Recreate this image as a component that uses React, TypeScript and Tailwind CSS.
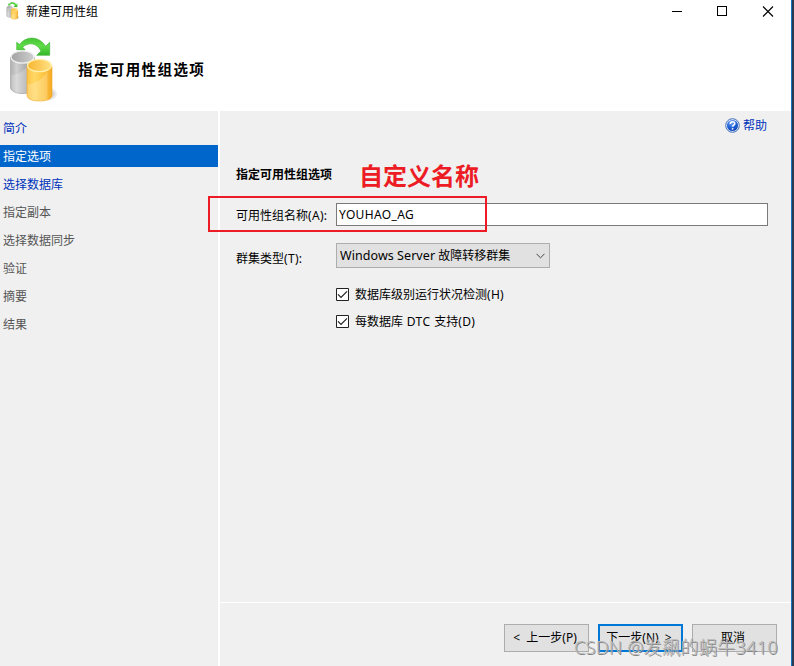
import type { ReactNode } from "react";
import { clsx } from "clsx";

type Step = { label: string; state: "link" | "active" | "pending" };

const steps: Step[] = [
  { label: "简介", state: "link" },
  { label: "指定选项", state: "active" },
  { label: "选择数据库", state: "link" },
  { label: "指定副本", state: "pending" },
  { label: "选择数据同步", state: "pending" },
  { label: "验证", state: "pending" },
  { label: "摘要", state: "pending" },
  { label: "结果", state: "pending" },
];

function DatabaseIcon({ className }: { className?: string }) {
  return (
    <svg viewBox="0 0 50 66" className={className} fill="none">
      <defs>
        <linearGradient id="silver" x1="0" x2="1">
          <stop offset="0" stopColor="#b0b0b0" />
          <stop offset="0.25" stopColor="#cfcfcf" />
          <stop offset="0.6" stopColor="#b0b0b0" />
          <stop offset="1" stopColor="#949494" />
        </linearGradient>
        <linearGradient id="gold" x1="0" x2="1">
          <stop offset="0" stopColor="#fcc344" />
          <stop offset="0.3" stopColor="#ffd865" />
          <stop offset="0.7" stopColor="#fdc340" />
          <stop offset="1" stopColor="#f5aa25" />
        </linearGradient>
        <linearGradient id="silverTop" x1="0" x2="1">
          <stop offset="0" stopColor="#a2a2a2" />
          <stop offset="1" stopColor="#cfcfcf" />
        </linearGradient>
        <linearGradient id="goldTop" x1="0" x2="1">
          <stop offset="0" stopColor="#f8b52f" />
          <stop offset="1" stopColor="#ffe185" />
        </linearGradient>
        <linearGradient id="green" x1="0" y1="0" x2="0" y2="1">
          <stop offset="0" stopColor="#45c233" />
          <stop offset="0.45" stopColor="#5fdc48" />
          <stop offset="1" stopColor="#36b82a" />
        </linearGradient>
        <radialGradient id="shade">
          <stop offset="0" stopColor="#777" stopOpacity="0.65" />
          <stop offset="1" stopColor="#777" stopOpacity="0" />
        </radialGradient>
      </defs>
      <ellipse cx="39" cy="57" rx="10" ry="7" fill="url(#shade)" />
      <path d="M1.500 20v30c0 4 5 6.500 12 6.500S25.500 54 25.500 50V20z" fill="url(#silver)" stroke="#9b9b9b" strokeWidth=".6" />
      <path d="M2.500 38c6 0 14-4 18-12v30H8c-3-1-5.500-3-5.500-6z" fill="#fff" opacity=".22" />
      <ellipse cx="13.500" cy="20" rx="11.500" ry="6.200" fill="url(#silverTop)" stroke="#f1f1f1" strokeWidth="1.200" />
      <path d="M18 28.500V58c0 4 5 6 12.500 6S43 62 43 58V28.500z" fill="url(#gold)" stroke="#eeaa2c" strokeWidth=".6" />
      <path d="M18.500 47c7 0 15-4 20-13v29c-6 2-20 1-20-5z" fill="#fff" opacity=".2" />
      <ellipse cx="30.500" cy="28.500" rx="11.900" ry="6.200" fill="url(#goldTop)" stroke="#fff0ad" strokeWidth="1.200" />
      <path
        d="M7.700 5.300v7.400h8.500l-2.600-2.400c5-5 14-5.300 18.400 3.700l-4.300 4.300h13V5.300l-4 4C30-.800 18-1.800 10.500 7.400z"
        fill="url(#green)"
        stroke="#3bb02f"
        strokeWidth=".6"
        strokeLinejoin="round"
      />
    </svg>
  );
}

function HelpIcon() {
  return (
    <svg viewBox="0 0 15 15" className="size-[15px] -translate-y-px" fill="none">
      <defs>
        <radialGradient id="help" cx=".4" cy=".25" r=".8">
          <stop offset="0" stopColor="#77a9f5" />
          <stop offset=".55" stopColor="#2263d8" />
          <stop offset="1" stopColor="#0b3fae" />
        </radialGradient>
      </defs>
      <circle cx="7.500" cy="7.500" r="6.800" fill="#e3edfb" stroke="#4470b8" strokeWidth="1" />
      <circle cx="7.500" cy="7.500" r="5.500" fill="url(#help)" />
      <path d="M5.300 5.900c0-2.900 4.500-2.800 4.500-.3 0 1.600-2.200 1.500-2.200 3.200" stroke="#fff" strokeWidth="1.600" />
      <circle cx="7.600" cy="10.800" r=".9" fill="#fff" />
    </svg>
  );
}

function TitleBar() {
  return (
    <div className="flex h-6 items-center pl-[5px]">
      <DatabaseIcon className="mr-[5px] h-[18px] w-4 -translate-y-px" />
      <span className="text-[12px] text-black">新建可用性组</span>
      <div className="mr-[17px] mb-0.5 ml-auto flex items-center gap-[35px]">
        <svg viewBox="0 0 10 10" className="size-[10px]" shapeRendering="crispEdges">
          <path d="M0 5.500h10" stroke="#000" />
        </svg>
        <svg viewBox="0 0 10 10" className="size-[10px]" shapeRendering="crispEdges">
          <path d="M.5.500h9v9h-9z" stroke="#000" fill="none" />
        </svg>
        <svg viewBox="0 0 12 11" className="h-[11px] w-3">
          <path d="M1 .500l10 10M11 .500l-10 10" stroke="#000" strokeWidth="1.100" />
        </svg>
      </div>
    </div>
  );
}

function Sidebar() {
  return (
    <nav className="flex w-[220px] flex-col gap-1.5 border-r-2 border-white pt-1.5">
      {steps.map((step) => (
        <div
          key={step.label}
          className={clsx(
            "flex h-[22px] items-center pt-0.5 pl-[3px] text-[12px]",
            step.state === "active" && "bg-[#0066cc] text-white",
            step.state === "link" && "text-[#0033bb]",
            step.state === "pending" && "text-[#555555]",
          )}
        >
          {step.label}
        </div>
      ))}
    </nav>
  );
}

function CheckOption({ children }: { children: ReactNode }) {
  return (
    <label className="flex h-[27px] items-center gap-1.5">
      <svg viewBox="0 0 13 13" className="size-[13px]" fill="none">
        <path d="M.5.500h12v12h-12z" fill="#fff" stroke="#222" />
        <path d="M2 6.300l3 3 6-6" stroke="#222" strokeWidth="1.200" />
      </svg>
      <span>{children}</span>
    </label>
  );
}

function DialogButton({ primary, children }: { primary?: boolean; children: ReactNode }) {
  return (
    <button
      className={clsx(
        "flex h-7 w-[85px] items-center justify-center bg-[#e1e1e1] text-[12px] whitespace-pre text-black",
        primary ? "border-2 border-[#0078d7] pr-[3px]" : "border border-[#adadad] pr-[3px]",
      )}
    >
      {children}
    </button>
  );
}

export default function App() {
  return (
    <div className="relative flex h-[666px] w-[794px] flex-col overflow-hidden border-r-2 border-[#2c3b52] bg-[#f0f0f0] font-['Noto_Sans','Noto_Sans_CJK_SC',sans-serif] text-[12px] leading-5 text-black">
      <div className="flex min-h-0 flex-1 flex-col border-r border-[#1873c5]">
        <header className="h-[111px] bg-white">
          <TitleBar />
          <div className="flex h-[87px] items-start pl-[9px]">
            <DatabaseIcon className="mt-[13px] h-[66px] w-[50px]" />
            <h1 className="mt-[35px] ml-[19px] text-[14.5px] font-bold tracking-[1.4px]">指定可用性组选项</h1>
          </div>
        </header>

        <div className="flex min-h-0 flex-1">
          <Sidebar />
          <main className="flex flex-1 flex-col">
            <div className="flex h-[491px] flex-col pr-6 pl-4">
              <div className="mt-[5px] flex items-center justify-end gap-[3px] text-[#0033bb]">
                <HelpIcon />
                <span>帮助</span>
              </div>
              <h2 className="mt-[29px] font-bold">指定可用性组选项</h2>

              <div className="-mr-px mt-[18px] flex h-[23px] items-center">
                <label className="w-[100px] pt-0.5">
                  可用性组名称<span className="tracking-[0.3px]">(A):</span>
                </label>
                <input
                  className="h-[23px] min-w-0 flex-1 border border-[#7a7a7a] bg-white px-0.5 text-[12px] tracking-[0.35px] outline-none"
                  defaultValue="YOUHAO_AG"
                />
              </div>

              <div className="mt-[17px] flex h-[25px] items-center">
                <label className="w-[100px] pt-1.5">
                  群集类型<span className="tracking-[0.3px]">(T):</span>
                </label>
                <div className="flex h-[25px] w-[214px] items-center justify-between border border-[#adadad] bg-[#e1e1e1] pr-1 pl-[3px]">
                  <span>
                    <span className="text-[12.5px] tracking-[0.06px]">Windows Server</span> 故障转移群集
                  </span>
                  <svg viewBox="0 0 9 6" className="w-[9px]" fill="none">
                    <path d="M.5.800l4 4 4-4" stroke="#444" />
                  </svg>
                </div>
              </div>

              <div className="mt-[13px] ml-[100px] flex flex-col">
                <CheckOption>
                  数据库级别运行状况检测<span className="tracking-[0.3px]">(H)</span>
                </CheckOption>
                <CheckOption>
                  每数据库<span className="tracking-[0.5px]"> DTC </span>支持<span className="tracking-[0.4px]">(D)</span>
                </CheckOption>
              </div>
            </div>

            <div className="flex flex-1 items-start justify-end gap-[9px] border-t border-white pt-[21px] pr-3.5">
              <DialogButton>{"<  上一步(P)"}</DialogButton>
              <DialogButton primary>{"下一步(N)  >"}</DialogButton>
              <DialogButton>取消</DialogButton>
            </div>
          </main>
        </div>
      </div>

      {/* Annotation */}
      <div className="pointer-events-none absolute top-[196px] left-[208px] h-9 w-[279px] border-2 border-[#ed1c24]" />
      <div className="absolute top-[161px] left-[359px] text-[24px] leading-[30px] font-bold text-[#ed1c24]">自定义名称</div>

      {/* Watermark */}
      <div className="pointer-events-none absolute top-[635px] left-[574px] text-[18.2px] leading-6 font-light tracking-[0.2px] whitespace-nowrap text-[#b8b8b8] [text-shadow:1px_1px_0_#858585]">
        CSDN @发飙的蜗牛3410
      </div>
    </div>
  );
}
